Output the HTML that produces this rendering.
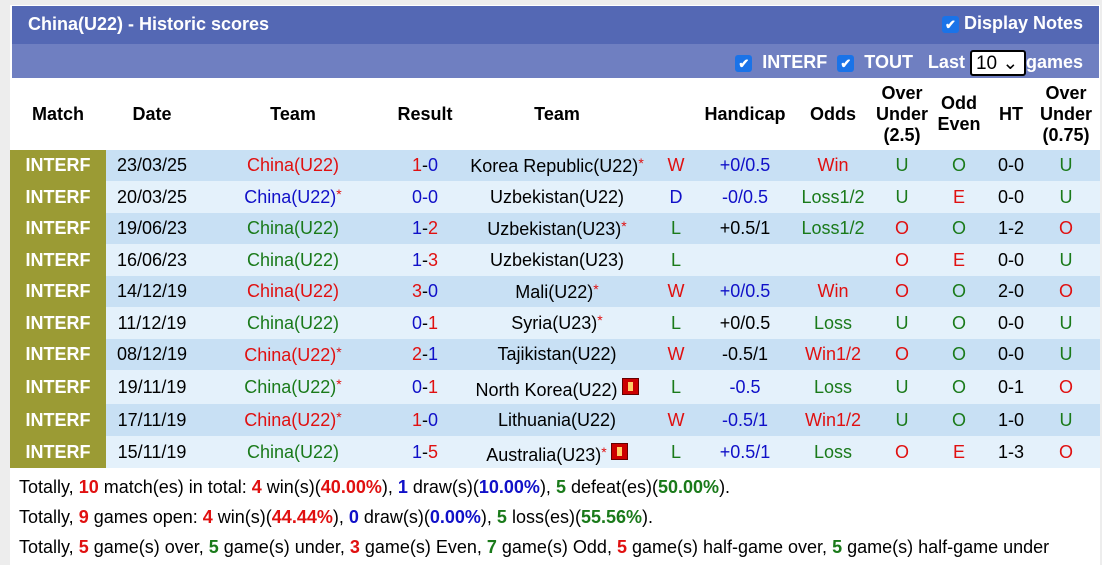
<!DOCTYPE html>
<html><head><meta charset="utf-8"><style>
body{margin:0;background:#ededed;font-family:"Liberation Sans",Arial,sans-serif;}
.wrap{position:absolute;left:10px;top:5px;width:1090px;height:560px;background:#fff;}
.t1{position:absolute;left:12px;top:6px;width:1087px;height:38px;background:#5468b4;color:#fff;font-weight:bold;font-size:18px;}
.t2{position:absolute;left:12px;top:44px;width:1087px;height:34px;background:#6f7fc1;color:#fff;font-weight:bold;font-size:18px;}
.cb{display:inline-block;width:17px;height:17px;background:#1a73e8;border-radius:3px;color:#fff;font-size:13px;line-height:17px;text-align:center;vertical-align:0px;}
table{position:absolute;left:10px;top:78px;width:1090px;border-collapse:collapse;font-size:18px;}
th{font-weight:bold;height:72px;padding:0;line-height:21px;}
td{padding:0;text-align:center;white-space:nowrap;}
td.m{background:#9b9b34;color:#fff;font-weight:bold;font-size:18px;width:96px;}
tr.a td{background:#c8e0f4}tr.b td{background:#e4f1fb}
tr.a td.m,tr.b td.m{background:#9b9b34}
.r{color:#e01010}.bl{color:#1010c8}.g{color:#1a7a1a}.s{color:#e01010;font-size:14px;vertical-align:4px}
.fl{display:inline-block;width:15px;height:15px;background:#c00;border:1px solid #600;vertical-align:1px;position:relative;margin-left:4px}
.fl:after{content:"";position:absolute;left:5px;top:3px;width:5px;height:9px;background:#fc6}
.sum{position:absolute;left:19px;font-size:18px;}
.sum b.r{color:#e01010}.sum b.bl{color:#1010c8}.sum b.g{color:#1a7a1a}
</style></head><body>
<div class="wrap"></div>
<div class="t1"><span style="position:absolute;left:16px;top:8px">China(U22) - Historic scores</span><span style="position:absolute;right:16px;top:7px"><span class="cb">✔</span> Display Notes</span></div>
<div class="t2"><span style="position:absolute;right:16px;top:6px"><span class="cb">✔</span>&nbsp; INTERF &nbsp;<span class="cb">✔</span>&nbsp; TOUT &nbsp;&nbsp;Last <span style="display:inline-block;border:2px solid #000;border-radius:3px;background:#fff;color:#000;font-weight:normal;width:56px;height:26px;line-height:24px;text-align:left;padding-left:4px;box-sizing:border-box;vertical-align:middle;font-size:19px">10 ⌄</span>games</span></div>
<table>
<tr><th style="width:96px">Match</th><th style="width:92px">Date</th><th style="width:190px">Team</th><th style="width:74px">Result</th><th style="width:190px">Team</th><th style="width:48px"></th><th style="width:90px">Handicap</th><th style="width:86px">Odds</th><th style="width:50px">Over<br>Under<br>(2.5)</th><th style="width:62px">Odd<br>Even</th><th style="width:42px">HT</th><th>Over<br>Under<br>(0.75)</th></tr>
<tr class="a" style="height:31px"><td class="m">INTERF</td><td>23/03/25</td><td class="r">China(U22)</td><td><span class="r">1</span>-<span class="bl">0</span></td><td>Korea Republic(U22)<span class="s">*</span></td><td class="r">W</td><td class="bl">+0/0.5</td><td class="r">Win</td><td class="g">U</td><td class="g">O</td><td>0-0</td><td class="g">U</td></tr>
<tr class="b" style="height:32px"><td class="m">INTERF</td><td>20/03/25</td><td class="bl">China(U22)<span class="s">*</span></td><td class="bl">0-0</td><td>Uzbekistan(U22)</td><td class="bl">D</td><td class="bl">-0/0.5</td><td class="g">Loss1/2</td><td class="g">U</td><td class="r">E</td><td>0-0</td><td class="g">U</td></tr>
<tr class="a" style="height:31px"><td class="m">INTERF</td><td>19/06/23</td><td class="g">China(U22)</td><td><span class="bl">1</span>-<span class="r">2</span></td><td>Uzbekistan(U23)<span class="s">*</span></td><td class="g">L</td><td>+0.5/1</td><td class="g">Loss1/2</td><td class="r">O</td><td class="g">O</td><td>1-2</td><td class="r">O</td></tr>
<tr class="b" style="height:32px"><td class="m">INTERF</td><td>16/06/23</td><td class="g">China(U22)</td><td><span class="bl">1</span>-<span class="r">3</span></td><td>Uzbekistan(U23)</td><td class="g">L</td><td></td><td></td><td class="r">O</td><td class="r">E</td><td>0-0</td><td class="g">U</td></tr>
<tr class="a" style="height:31px"><td class="m">INTERF</td><td>14/12/19</td><td class="r">China(U22)</td><td><span class="r">3</span>-<span class="bl">0</span></td><td>Mali(U22)<span class="s">*</span></td><td class="r">W</td><td class="bl">+0/0.5</td><td class="r">Win</td><td class="r">O</td><td class="g">O</td><td>2-0</td><td class="r">O</td></tr>
<tr class="b" style="height:32px"><td class="m">INTERF</td><td>11/12/19</td><td class="g">China(U22)</td><td><span class="bl">0</span>-<span class="r">1</span></td><td>Syria(U23)<span class="s">*</span></td><td class="g">L</td><td>+0/0.5</td><td class="g">Loss</td><td class="g">U</td><td class="g">O</td><td>0-0</td><td class="g">U</td></tr>
<tr class="a" style="height:31px"><td class="m">INTERF</td><td>08/12/19</td><td class="r">China(U22)<span class="s">*</span></td><td><span class="r">2</span>-<span class="bl">1</span></td><td>Tajikistan(U22)</td><td class="r">W</td><td>-0.5/1</td><td class="r">Win1/2</td><td class="r">O</td><td class="g">O</td><td>0-0</td><td class="g">U</td></tr>
<tr class="b" style="height:34px"><td class="m">INTERF</td><td>19/11/19</td><td class="g">China(U22)<span class="s">*</span></td><td><span class="bl">0</span>-<span class="r">1</span></td><td style="padding-top:4px">North Korea(U22)<span class="fl"></span></td><td class="g">L</td><td class="bl">-0.5</td><td class="g">Loss</td><td class="g">U</td><td class="g">O</td><td>0-1</td><td class="r">O</td></tr>
<tr class="a" style="height:32px"><td class="m">INTERF</td><td>17/11/19</td><td class="r">China(U22)<span class="s">*</span></td><td><span class="r">1</span>-<span class="bl">0</span></td><td>Lithuania(U22)</td><td class="r">W</td><td class="bl">-0.5/1</td><td class="r">Win1/2</td><td class="g">U</td><td class="g">O</td><td>1-0</td><td class="g">U</td></tr>
<tr class="b" style="height:32px"><td class="m">INTERF</td><td>15/11/19</td><td class="g">China(U22)</td><td><span class="bl">1</span>-<span class="r">5</span></td><td style="padding-top:4px">Australia(U23)<span class="s">*</span><span class="fl"></span></td><td class="g">L</td><td class="bl">+0.5/1</td><td class="g">Loss</td><td class="r">O</td><td class="r">E</td><td>1-3</td><td class="r">O</td></tr>
</table>
<div class="sum" style="top:477px">Totally, <b class="r">10</b> match(es) in total: <b class="r">4</b> win(s)(<b class="r">40.00%</b>), <b class="bl">1</b> draw(s)(<b class="bl">10.00%</b>), <b class="g">5</b> defeat(es)(<b class="g">50.00%</b>).</div>
<div class="sum" style="top:507px">Totally, <b class="r">9</b> games open: <b class="r">4</b> win(s)(<b class="r">44.44%</b>), <b class="bl">0</b> draw(s)(<b class="bl">0.00%</b>), <b class="g">5</b> loss(es)(<b class="g">55.56%</b>).</div>
<div class="sum" style="top:537px">Totally, <b class="r">5</b> game(s) over, <b class="g">5</b> game(s) under, <b class="r">3</b> game(s) Even, <b class="g">7</b> game(s) Odd, <b class="r">5</b> game(s) half-game over, <b class="g">5</b> game(s) half-game under</div>
</body></html>
